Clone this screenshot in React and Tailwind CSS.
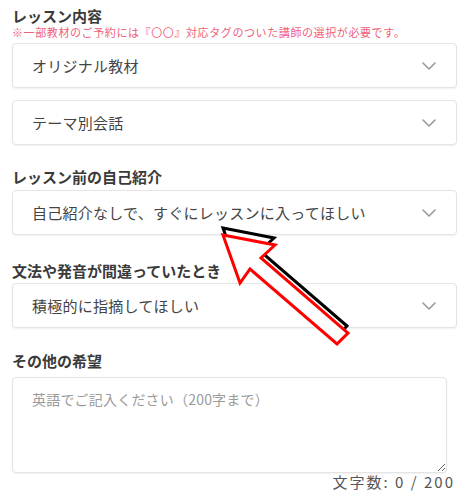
import React from "react";

const font = { fontFamily: '"Noto Sans CJK JP", "Noto Sans", sans-serif' };

function Chevron() {
  return (
    <svg width="14" height="8" viewBox="0 0 14 8" fill="none" className="shrink-0">
      <polyline points="1,1 7,7 13,1" stroke="#9a9a9a" strokeWidth="1.6" strokeLinecap="round" strokeLinejoin="round" />
    </svg>
  );
}

function Select({ text, className = "" }) {
  return (
    <div
      className={
        "flex h-[45px] w-[445px] items-center justify-between rounded-[4px] border border-[#e4e4e4] bg-white pl-[19px] pr-[20px] shadow-[0_1px_2px_rgba(0,0,0,0.06)] " +
        className
      }
    >
      <span className="text-[15px] leading-[20px] tracking-[0.25px] text-[#444]">{text}</span>
      <Chevron />
    </div>
  );
}

function Label({ children, className = "" }) {
  return (
    <div className={"text-[15px] font-bold leading-[20px] text-[#3a3a3a] " + className}>{children}</div>
  );
}

export default function App() {
  return (
    <div className="relative h-[500px] w-[469px] overflow-hidden bg-white" style={font}>
      <div className="flex flex-col px-[12px] pt-[6px]">
        <div className="text-[15px] font-bold leading-[19px] text-[#3a3a3a]">レッスン内容</div>
        <div className="text-[11px] leading-[14px] tracking-[0.6px] text-[#f0607a]">
          ※一部教材のご予約には『〇〇』対応タグのついた講師の選択が必要です。
        </div>
        <Select text="オリジナル教材" className="mt-[4px]" />
        <Select text="テーマ別会話" className="mt-[12px]" />
        <Label className="mt-[22px]">レッスン前の自己紹介</Label>
        <Select text="自己紹介なしで、すぐにレッスンに入ってほしい" className="mt-[3px]" />
        <Label className="mt-[26px]">文法や発音が間違っていたとき</Label>
        <Select text="積極的に指摘してほしい" className="mt-[2px]" />
        <Label className="mt-[23px]">その他の希望</Label>
        <textarea
          className="mt-[6px] h-[96px] w-[435px] resize rounded-[4px] border border-[#e4e4e4] bg-white px-[19px] pt-[11px] text-[14px] leading-[20px] tracking-[0.2px] text-[#444] shadow-[0_1px_2px_rgba(0,0,0,0.06)] outline-none placeholder:text-[#9a9a9a]"
          placeholder="英語でご記入ください（200字まで）"
          style={font}
        />
        <div className="mr-[2px] flex justify-end text-[15px] leading-[18px] tracking-[2px] text-[#555]">
          文字数: 0 / 200
        </div>
      </div>

      <svg className="pointer-events-none absolute left-0 top-0" width="469" height="500" viewBox="0 0 469 500">
        <polygon
          points="223,228 274,238 260,251 347,326 337,337 250,262 240,276"
          fill="white"
          stroke="black"
          strokeWidth="3"
          strokeLinejoin="miter"
        />
        <polygon
          points="223,235 275,245 261,258 348,333 337,344 250,269 240,283"
          fill="white"
          stroke="#ff0000"
          strokeWidth="3"
          strokeLinejoin="miter"
        />
      </svg>
    </div>
  );
}
